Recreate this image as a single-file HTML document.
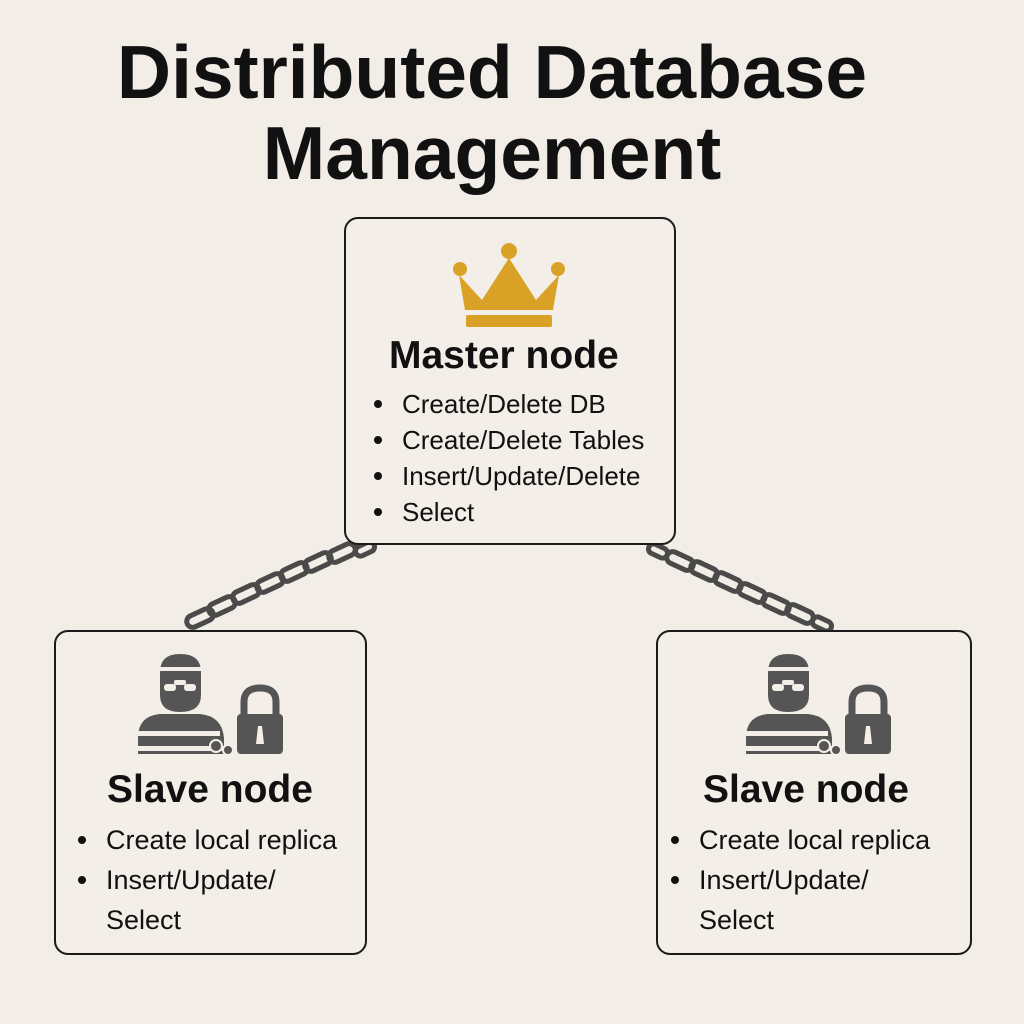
<!DOCTYPE html>
<html><head><style>
body{margin:0;width:1024px;height:1024px;background:#f2ede6;position:relative;overflow:hidden;font-family:"Liberation Sans",sans-serif;color:#111}
.t{position:absolute;left:0;width:984px;text-align:center;font-weight:bold;font-size:75px;line-height:80px}
.box{position:absolute;border:2px solid #1a1a1a;border-radius:14px;background:#f3eee7}
.h{position:absolute;font-weight:bold;font-size:39px;white-space:nowrap}
.b{position:absolute;font-size:26px;white-space:nowrap;line-height:36px}
.b span{display:inline-block;width:8px;height:8px;background:#111;border-radius:50%;margin-right:20px;vertical-align:middle;position:relative;top:-2px}
</style></head><body>
<div class="t" style="top:32px">Distributed Database</div>
<div class="t" style="top:113px">Management</div>

<svg width="1024" height="1024" style="position:absolute;left:0;top:0">
<g fill="none" stroke="#4a4a4a" stroke-width="5" stroke-linecap="round">
<g>
<rect x="-14" y="-6" width="28" height="12" rx="6" transform="translate(200,618) rotate(-25)"/>
<rect x="-14" y="-6" width="28" height="12" rx="6" transform="translate(222,606) rotate(-25)"/>
<rect x="-14" y="-6" width="28" height="12" rx="6" transform="translate(246,594) rotate(-25)"/>
<rect x="-14" y="-6" width="28" height="12" rx="6" transform="translate(270,583) rotate(-25)"/>
<rect x="-14" y="-6" width="28" height="12" rx="6" transform="translate(294,572) rotate(-25)"/>
<rect x="-14" y="-6" width="28" height="12" rx="6" transform="translate(318,562) rotate(-25)"/>
<rect x="-14" y="-6" width="28" height="12" rx="6" transform="translate(342,553) rotate(-25)"/>
<rect x="-10" y="-5" width="20" height="10" rx="5" transform="translate(365,549) rotate(-25)"/>
</g>
<g>
<rect x="-10" y="-5" width="20" height="10" rx="5" transform="translate(658,551) rotate(25)"/>
<rect x="-14" y="-6" width="28" height="12" rx="6" transform="translate(680,561) rotate(25)"/>
<rect x="-14" y="-6" width="28" height="12" rx="6" transform="translate(704,571) rotate(25)"/>
<rect x="-14" y="-6" width="28" height="12" rx="6" transform="translate(728,582) rotate(25)"/>
<rect x="-14" y="-6" width="28" height="12" rx="6" transform="translate(752,593) rotate(25)"/>
<rect x="-14" y="-6" width="28" height="12" rx="6" transform="translate(776,604) rotate(25)"/>
<rect x="-14" y="-6" width="28" height="12" rx="6" transform="translate(800,614) rotate(25)"/>
<rect x="-10" y="-5" width="20" height="10" rx="5" transform="translate(822,624) rotate(25)"/>
</g>
</g>
</svg>

<div class="box" style="left:344px;top:217px;width:328px;height:324px"></div>
<div class="box" style="left:54px;top:630px;width:309px;height:321px"></div>
<div class="box" style="left:656px;top:630px;width:312px;height:321px"></div>

<svg width="1024" height="1024" style="position:absolute;left:0;top:0">
<g fill="#d9a126">
<path d="M459 275 L482 300 L509 258 L536 300 L559 275 L553 310 L465 310 Z"/>
<circle cx="460" cy="269" r="7"/><circle cx="509" cy="251" r="8"/><circle cx="558" cy="269" r="7"/>
<rect x="466" y="315" width="86" height="12" rx="2"/>
</g>
<g id="thief" fill="#555">
<path d="M160 672 Q160 654 180 654 Q201 654 201 672 L201 695 Q201 712 180 712 Q160 712 160 695 Z"/>
<rect x="158" y="667" width="45" height="4" fill="#f3eee7"/>
<rect x="164" y="684" width="12" height="7" rx="3" fill="#f3eee7"/><rect x="184" y="684" width="12" height="7" rx="3" fill="#f3eee7"/><rect x="174" y="680" width="12" height="5" rx="2" fill="#f3eee7"/>
<path d="M138 754 L138 738 Q138 716 160 714 L200 714 Q222 716 224 738 L224 754 Z"/>
<rect x="136" y="731" width="84" height="5" fill="#f3eee7"/><rect x="136" y="746" width="90" height="5" fill="#f3eee7"/>
<path d="M244 716 L244 702 Q244 688 260 688 Q276 688 276 702 L276 716" fill="none" stroke="#555" stroke-width="7"/>
<rect x="237" y="714" width="46" height="40" rx="4"/>
<path d="M258 726 L262 726 L264 744 L256 744 Z" fill="#f3eee7"/>
<circle cx="216" cy="746" r="6" fill="#555" stroke="#f3eee7" stroke-width="2"/>
<circle cx="228" cy="750" r="5" fill="#555" stroke="#f3eee7" stroke-width="2"/>
</g>
<use href="#thief" transform="translate(608,0)"/>
</svg>

<div class="h" style="left:389px;top:334px">Master node</div>
<div class="b" style="left:374px;top:386px"><span></span>Create/Delete DB</div>
<div class="b" style="left:374px;top:422px"><span></span>Create/Delete Tables</div>
<div class="b" style="left:374px;top:458px"><span></span>Insert/Update/Delete</div>
<div class="b" style="left:374px;top:494px"><span></span>Select</div>

<div class="h" style="left:107px;top:768px">Slave node</div>
<div class="b" style="left:78px;top:820px;line-height:40px;font-size:27px"><span></span>Create local replica</div>
<div class="b" style="left:78px;top:860px;line-height:40px;font-size:27px"><span></span>Insert/Update/<br><i style="font-style:normal;margin-left:28px">Select</i></div>

<div class="h" style="left:703px;top:768px">Slave node</div>
<div class="b" style="left:671px;top:820px;line-height:40px;font-size:27px"><span></span>Create local replica</div>
<div class="b" style="left:671px;top:860px;line-height:40px;font-size:27px"><span></span>Insert/Update/<br><i style="font-style:normal;margin-left:28px">Select</i></div>
</body></html>
